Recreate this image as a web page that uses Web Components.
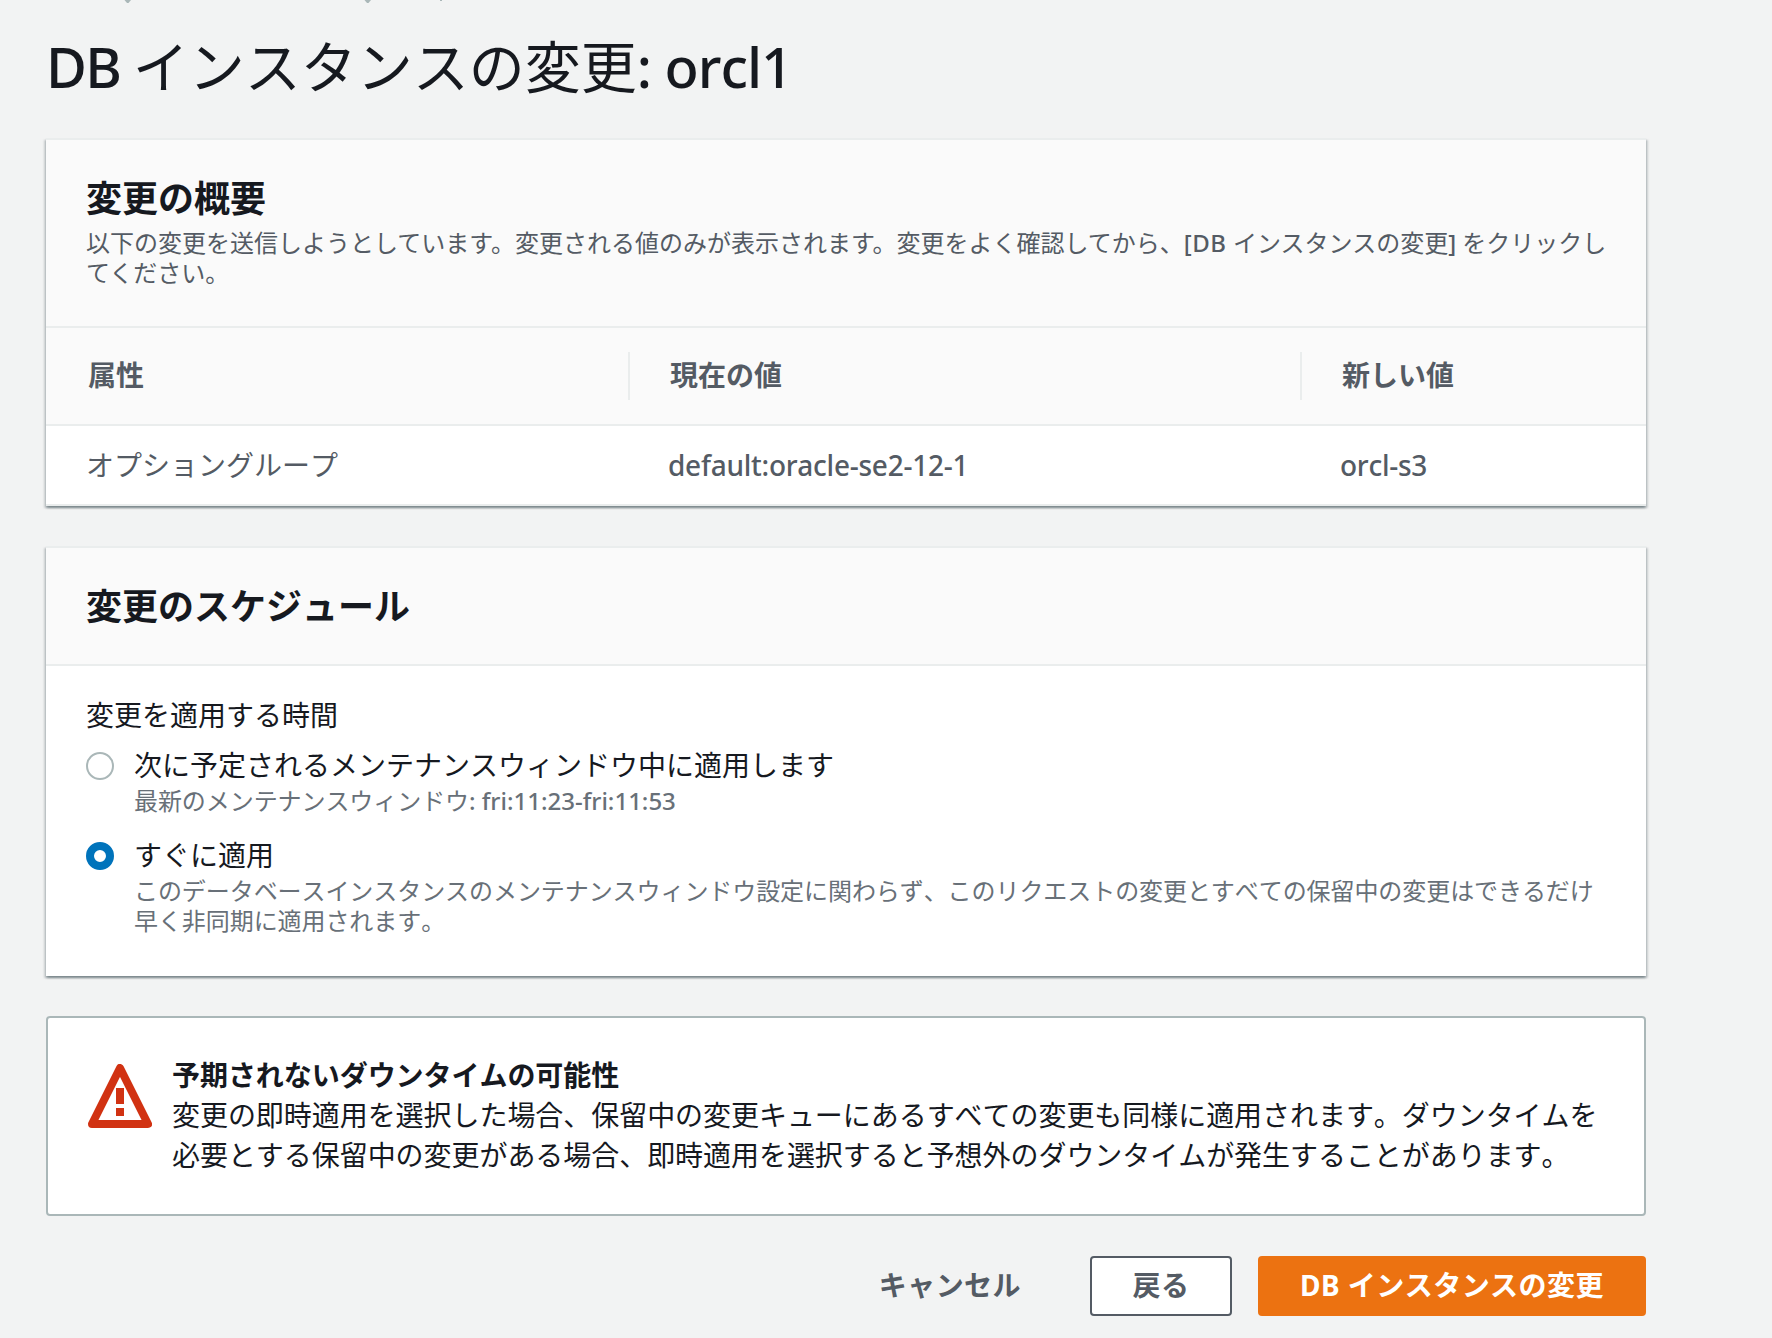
<!DOCTYPE html>
<html lang="ja">
<head>
<meta charset="utf-8">
<title>DB インスタンスの変更</title>
<style>
  body {
    margin: 0;
    background: #f2f3f3;
    color: #16191f;
    font-family: 'Noto Sans', 'Noto Sans CJK JP', sans-serif;
    font-size: 28px;
    line-height: 40px;
    font-kerning: none;
    text-autospace: no-autospace;
  }
</style>
</head>
<body>
<modify-page></modify-page>

<script>
class LatinText extends HTMLElement {
  constructor() {
    super();
    this.root = this.attachShadow({ mode: 'open' });
    // no whitespace around the slot: it would show up inside the sentence
    this.root.innerHTML = `<style>
        :host { display: inline; font-weight: 500; letter-spacing: var(--track, 0); }
      </style><slot></slot>`;
  }
}

class BreadcrumbEdge extends HTMLElement {
  constructor() {
    super();
    this.root = this.attachShadow({ mode: 'open' });
    this.root.innerHTML = `
      <style>
        :host { display: block; height: 4px; }
        svg { display: block; }
      </style>
      <svg width="500" height="4" fill="#aab7b8">
        <path d="M124.500 0h6.500l-2.500 3h-1.500z"/>
        <path d="M364.500 0h6.500l-2.500 3h-1.500z"/>
        <path d="M440 0h2v1h-2z"/>
      </svg>`;
  }
}

class ContentCard extends HTMLElement {
  constructor() {
    super();
    this.root = this.attachShadow({ mode: 'open' });
    this.root.innerHTML = `
      <style>
        :host {
          display: block;
          background: #fff;
          border-top: 2px solid #eaeded;
          box-shadow: 0 2px 2px 0 rgba(0, 28, 36, .3), 2px 2px 2px 0 rgba(0, 28, 36, .15), -2px 2px 2px 0 rgba(0, 28, 36, .15);
        }
        header {
          padding: 39px 40px 37px;
          background: #fafafa;
          border-bottom: 2px solid #eaeded;
        }
        h2 { margin: 0; font-size: 36px; line-height: 40px; font-weight: 700; }
        ::slotted([slot="description"]) {
          margin: 9px 0 0;
          padding-bottom: 1px;
          color: #545b64;
          font-size: 24px;
          font-kerning: normal;
          line-height: 30px;
          white-space: nowrap;
        }
      </style>
      <header>
        <h2><slot name="title"></slot></h2>
        <slot name="description"></slot>
      </header>
      <slot></slot>`;
  }
}

class ChangesTable extends HTMLElement {
  constructor() {
    super();
    this.root = this.attachShadow({ mode: 'open' });
    this.root.innerHTML = `
      <style>
        :host { display: block; color: #545b64; --track: -.009em; }
        .row { display: grid; grid-template-columns: 584px 672px 1fr; align-items: center; border-bottom: 2px solid #eaeded; }
        .head { height: 96px; background: #fafafa; font-weight: 700; }
        .body { height: 78px; }
        .body > div { padding-left: 38px; }
        .body > div:first-child { padding-left: 40px; }
        .head > div { height: 48px; line-height: 46px; box-sizing: border-box; padding-left: 40px; }
        .head > div:first-child { padding-left: 42px; }
        .head > div:not(:last-child) { border-right: 2px solid #eaeded; }
      </style>
      <div class="row head"><div>属性</div><div>現在の値</div><div>新しい値</div></div>
      <div class="row body">
        <div>オプショングループ</div>
        <div><latin-text>default:oracle-se2-12-1</latin-text></div>
        <div><latin-text>orcl-s3</latin-text></div>
      </div>`;
  }
}

class RadioOption extends HTMLElement {
  constructor() {
    super();
    this.root = this.attachShadow({ mode: 'open' });
    this.root.innerHTML = `
      <style>
        :host { display: flex; gap: 20px; white-space: nowrap; }
        .dot {
          flex: none;
          box-sizing: border-box;
          width: 28px;
          height: 28px;
          margin-top: 7px;
          border: 2px solid #aab7b8;
          border-radius: 50%;
          background: #fff;
        }
        :host([checked]) .dot { border: 8px solid #0073bb; }
        .hint { margin: 1px 0 -1px; color: #687078; font-size: 24px; line-height: 30px; letter-spacing: -.07px; }
      </style>
      <span class="dot"></span>
      <div>
        <div><slot name="label"></slot></div>
        <div class="hint"><slot></slot></div>
      </div>`;
  }
}

class WarningBox extends HTMLElement {
  constructor() {
    super();
    this.root = this.attachShadow({ mode: 'open' });
    this.root.innerHTML = `
      <style>
        :host {
          display: flex;
          gap: 20px;
          box-sizing: border-box;
          height: 200px;
          padding: 37px 40px;
          background: #fff;
          border: 2px solid #aab7b8;
          border-radius: 4px;
          letter-spacing: -.05px;
          white-space: nowrap;
        }
        svg { flex: none; width: 64px; height: 64px; margin-top: 9px; }
        strong { display: block; }
      </style>
      <svg viewBox="0 0 16 16" fill="none" stroke="#d13212" stroke-width="2" stroke-linejoin="round">
        <path d="M8 1l7 14H1z"/>
        <path d="M8 6v4M8 11v2"/>
      </svg>
      <div><strong><slot name="title"></slot></strong><slot></slot></div>`;
  }
}

class ActionButton extends HTMLElement {
  constructor() {
    super();
    this.root = this.attachShadow({ mode: 'open' });
    this.root.innerHTML = `
      <style>
        :host { display: block; }
        button {
          display: block;
          box-sizing: border-box;
          height: 60px;
          padding: 0 41px 2px;
          border: 2px solid transparent;
          border-radius: 4px;
          background: none;
          color: #545b64;
          font: inherit;
          font-kerning: none;
          font-weight: 700;
          letter-spacing: .45px;
          line-height: 54px;
          white-space: nowrap;
        }
        :host([variant="normal"]) button { width: 142px; padding: 0 0 2px; background: #fff; border-color: #545b64; }
        :host([variant="primary"]) button { width: 388px; padding: 0 0 2px; background: #ec7211; color: #fff; }
      </style>
      <button type="button"><slot></slot></button>`;
  }
}

class ModifyPage extends HTMLElement {
  constructor() {
    super();
    this.root = this.attachShadow({ mode: 'open' });
    this.root.innerHTML = `
      <style>
        :host { display: block; height: 1338px; overflow: hidden; }
        main { display: flex; flex-direction: column; width: 1600px; margin-left: 46px; }
        h1 { --track: -.018em; margin: 22px 0 32px; font-size: 56px; line-height: 80px; font-weight: 400; white-space: nowrap; }
        h1 latin-text:first-child { --track: -.032em; }
        p latin-text:first-child { --track: .02em; }
        content-card + content-card { margin-top: 40px; }
        .schedule { display: flex; flex-direction: column; height: 310px; box-sizing: border-box; padding: 29px 40px 0; }
        .schedule radio-option { margin-top: 10px; }
        .schedule radio-option + radio-option { margin-top: 20px; }
        warning-box { margin-top: 40px; }
        .actions { display: flex; justify-content: flex-end; margin-top: 40px; }
        .actions action-button + action-button { margin-left: 26px; }
      </style>
      <breadcrumb-edge></breadcrumb-edge>
      <main>
        <h1><latin-text>DB </latin-text>インスタンスの変更<latin-text>: orcl1</latin-text></h1>
        <content-card>
          <span slot="title">変更の概要</span>
          <p slot="description">以下の変更を送信しようとしています。変更される値のみが表示されます。変更をよく確認してから、<latin-text>[DB </latin-text>インスタンスの変更<latin-text>] </latin-text>をクリックし<br>てください。</p>
          <changes-table></changes-table>
        </content-card>
        <content-card>
          <span slot="title">変更のスケジュール</span>
          <div class="schedule">
            <div>変更を適用する時間</div>
            <radio-option>
              <span slot="label">次に予定されるメンテナンスウィンドウ中に適用します</span>
              最新のメンテナンスウィンドウ<latin-text>: fri:11:23-fri:11:53</latin-text>
            </radio-option>
            <radio-option checked>
              <span slot="label">すぐに適用</span>
              このデータベースインスタンスのメンテナンスウィンドウ設定に関わらず、このリクエストの変更とすべての保留中の変更はできるだけ<br>早く非同期に適用されます。
            </radio-option>
          </div>
        </content-card>
        <warning-box>
          <span slot="title">予期されないダウンタイムの可能性</span>
          変更の即時適用を選択した場合、保留中の変更キューにあるすべての変更も同様に適用されます。ダウンタイムを<br>必要とする保留中の変更がある場合、即時適用を選択すると予想外のダウンタイムが発生することがあります。
        </warning-box>
        <div class="actions">
          <action-button>キャンセル</action-button>
          <action-button variant="normal">戻る</action-button>
          <action-button variant="primary">DB インスタンスの変更</action-button>
        </div>
      </main>`;
  }
}

customElements.define('latin-text', LatinText);
customElements.define('breadcrumb-edge', BreadcrumbEdge);
customElements.define('content-card', ContentCard);
customElements.define('changes-table', ChangesTable);
customElements.define('radio-option', RadioOption);
customElements.define('warning-box', WarningBox);
customElements.define('action-button', ActionButton);
customElements.define('modify-page', ModifyPage);
</script>
</body>
</html>
